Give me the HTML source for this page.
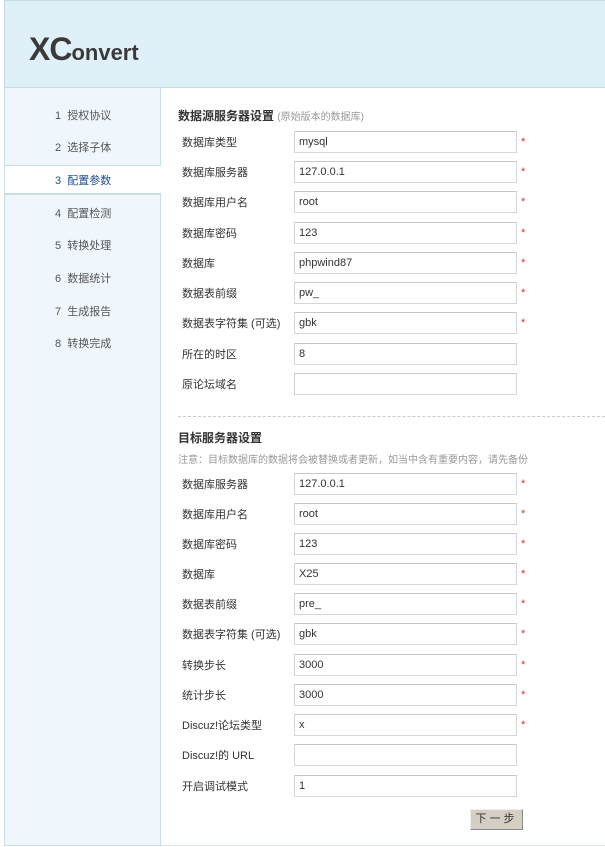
<!DOCTYPE html>
<html><head><meta charset="utf-8"><style>
*{margin:0;padding:0;box-sizing:border-box}
body{width:605px;height:847px;background:#fff;position:relative;overflow:hidden;font-family:"Liberation Sans","Noto Sans CJK SC",sans-serif;font-size:11px;color:#333}
.hd{position:absolute;left:4px;top:0;width:601px;height:88px;background:#e0f0f8;border:1px solid #c3dbe6;border-right:none}
.logo{position:absolute;left:24px;top:30px;font-size:32px;font-weight:bold;color:#3a3a3a;letter-spacing:-1px}
.logo small{font-size:22px;letter-spacing:0}
.sb{position:absolute;left:4px;top:88px;width:157px;height:758px;background:#eff7fc;border-left:1px solid #c8dde8;border-right:1px solid #c8dde8;border-bottom:1px solid #c8dde8}
.it{position:absolute;left:50px;color:#555;font-size:11px}
.act{position:absolute;left:0;top:77px;width:156px;height:29px;background:#fff;border-top:1px solid #c8dde8;border-bottom:1px solid #c8dde8}
.bot{position:absolute;left:161px;top:845px;width:444px;height:1px;background:#dde9ef}
.lb{position:absolute;left:182px;font-size:11px;color:#333}
.in{position:absolute;left:294px;width:223px;height:22px;border:1px solid #d6d6d6;border-top-color:#c8c8c8;background:#fff;padding-left:4px;display:flex;align-items:center;font-size:11px;color:#333}
.st{position:absolute;left:521px;color:#e03030;font-size:11px}
h3{position:absolute;left:178px;font-size:12px;font-weight:bold;color:#333}
h3 span{font-weight:normal;color:#999;font-size:10px}
.note{position:absolute;left:178px;top:451px;font-size:10px;color:#999}
.dash{position:absolute;left:178px;top:416px;width:427px;border-top:1px dashed #ccc}
.btn{position:absolute;left:470px;top:809px;width:53px;height:21px;background:#d4cfc4;border:1px solid #888;border-top-color:#eee;border-left-color:#eee;font-size:11px;text-align:center;line-height:19px;color:#333;letter-spacing:3px}
</style></head><body>
<div class="hd"><div class="logo">XC<small>onvert</small></div></div>
<div class="sb">
<div class="act"></div>
<div class="it" style="top:19px">1&nbsp;&nbsp;授权协议</div>
<div class="it" style="top:51px">2&nbsp;&nbsp;选择子体</div>
<div class="it" style="top:84px;color:#1f4f8f">3&nbsp;&nbsp;配置参数</div>
<div class="it" style="top:117px">4&nbsp;&nbsp;配置检测</div>
<div class="it" style="top:149px">5&nbsp;&nbsp;转换处理</div>
<div class="it" style="top:182px">6&nbsp;&nbsp;数据统计</div>
<div class="it" style="top:215px">7&nbsp;&nbsp;生成报告</div>
<div class="it" style="top:247px">8&nbsp;&nbsp;转换完成</div>
</div>
<div style="position:absolute;left:4px;top:165px;width:157px;height:1px;background:#c8dde8"></div>
<div style="position:absolute;left:4px;top:194px;width:157px;height:1px;background:#c8dde8"></div>
<div class="bot"></div>

<h3 style="top:107px">数据源服务器设置 <span>(原始版本的数据库)</span></h3>
<div class="lb" style="top:134px">数据库类型</div><div class="in" style="top:131px">mysql</div><div class="st" style="top:136px">*</div>
<div class="lb" style="top:164px">数据库服务器</div><div class="in" style="top:161px">127.0.0.1</div><div class="st" style="top:166px">*</div>
<div class="lb" style="top:194px">数据库用户名</div><div class="in" style="top:191px">root</div><div class="st" style="top:196px">*</div>
<div class="lb" style="top:225px">数据库密码</div><div class="in" style="top:222px">123</div><div class="st" style="top:227px">*</div>
<div class="lb" style="top:255px">数据库</div><div class="in" style="top:252px">phpwind87</div><div class="st" style="top:257px">*</div>
<div class="lb" style="top:285px">数据表前缀</div><div class="in" style="top:282px">pw_</div><div class="st" style="top:287px">*</div>
<div class="lb" style="top:315px">数据表字符集 (可选)</div><div class="in" style="top:312px">gbk</div><div class="st" style="top:317px">*</div>
<div class="lb" style="top:346px">所在的时区</div><div class="in" style="top:343px">8</div>
<div class="lb" style="top:376px">原论坛域名</div><div class="in" style="top:373px"></div>
<div class="dash"></div>
<h3 style="top:429px">目标服务器设置</h3>
<div class="note">注意：目标数据库的数据将会被替换或者更新，如当中含有重要内容，请先备份</div>
<div class="lb" style="top:476px">数据库服务器</div><div class="in" style="top:473px">127.0.0.1</div><div class="st" style="top:478px">*</div>
<div class="lb" style="top:506px">数据库用户名</div><div class="in" style="top:503px">root</div><div class="st" style="top:508px">*</div>
<div class="lb" style="top:536px">数据库密码</div><div class="in" style="top:533px">123</div><div class="st" style="top:538px">*</div>
<div class="lb" style="top:566px">数据库</div><div class="in" style="top:563px">X25</div><div class="st" style="top:568px">*</div>
<div class="lb" style="top:596px">数据表前缀</div><div class="in" style="top:593px">pre_</div><div class="st" style="top:598px">*</div>
<div class="lb" style="top:626px">数据表字符集 (可选)</div><div class="in" style="top:623px">gbk</div><div class="st" style="top:628px">*</div>
<div class="lb" style="top:657px">转换步长</div><div class="in" style="top:654px">3000</div><div class="st" style="top:659px">*</div>
<div class="lb" style="top:687px">统计步长</div><div class="in" style="top:684px">3000</div><div class="st" style="top:689px">*</div>
<div class="lb" style="top:717px">Discuz!论坛类型</div><div class="in" style="top:714px">x</div><div class="st" style="top:719px">*</div>
<div class="lb" style="top:747px">Discuz!的 URL</div><div class="in" style="top:744px"></div>
<div class="lb" style="top:778px">开启调试模式</div><div class="in" style="top:775px">1</div>
<div class="btn">下一步</div>
</body></html>
